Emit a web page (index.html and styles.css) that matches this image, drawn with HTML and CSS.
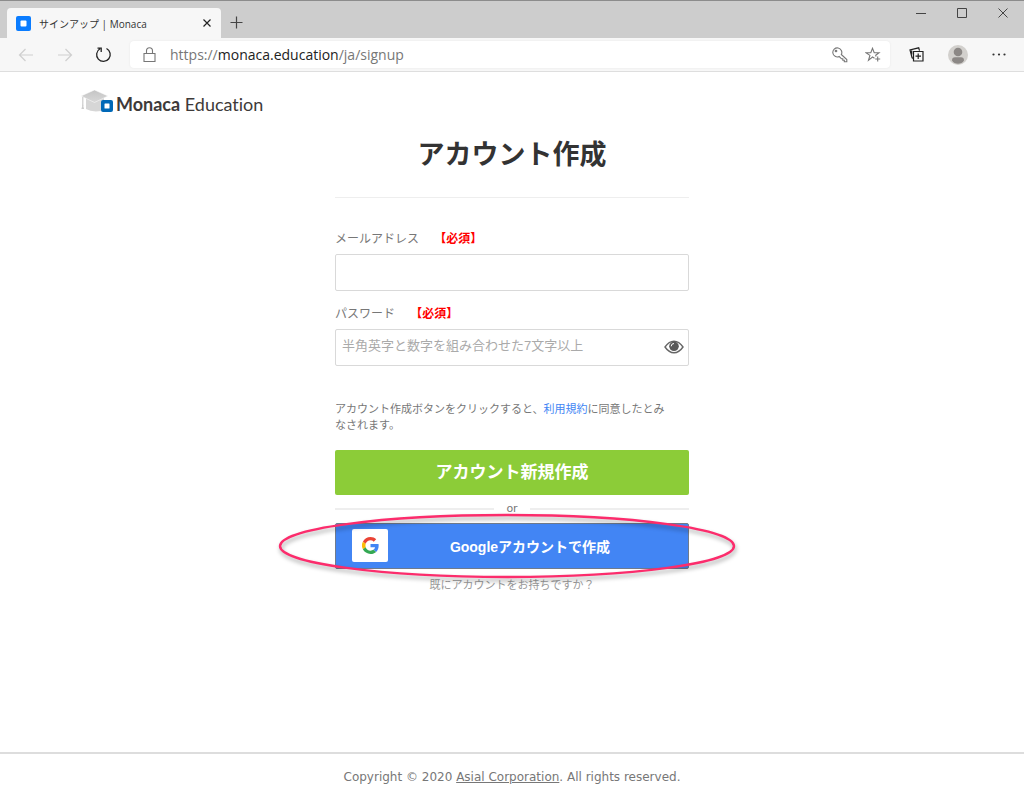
FILE: index.html
```
<!DOCTYPE html>
<html lang="ja">
<head>
<meta charset="utf-8">
<meta name="viewport" content="width=device-width, initial-scale=1">
<title>サインアップ | Monaca</title>
<link rel="stylesheet" href="styles.css">
</head>
<body>
<div class="browser">
  <div class="titlebar">
    <div class="tab">
      <svg class="tab-icon" width="15" height="15" viewBox="0 0 15 15"><rect width="15" height="15" rx="2" fill="#0a7cff"/><rect x="4.500" y="4.500" width="6" height="6" rx="1" fill="#fff"/></svg>
      <span class="tab-title">サインアップ | Monaca</span>
      <button class="tab-close" type="button" aria-label="タブを閉じる"><svg width="8" height="8" viewBox="0 0 8 8" fill="none" stroke="#222" stroke-width="1.2"><path d="M.5.5l7 7M7.5.5l-7 7"/></svg></button>
    </div>
    <button class="new-tab" type="button" aria-label="新しいタブ"><svg width="13" height="13" viewBox="0 0 13 13" fill="none" stroke="#444" stroke-width="1.2"><path d="M6.5 0.5v12M.5 6.5h12"/></svg></button>
    <div class="window-buttons">
      <button type="button" aria-label="最小化"><svg width="10" height="10" viewBox="0 0 10 10" fill="none" stroke="#444"><path d="M0 5.5h10"/></svg></button>
      <button type="button" aria-label="最大化"><svg width="10" height="10" viewBox="0 0 10 10" fill="none" stroke="#444"><path d="M.5.5h9v9h-9z"/></svg></button>
      <button type="button" aria-label="閉じる"><svg width="10" height="10" viewBox="0 0 10 10" fill="none" stroke="#444"><path d="M.5.5l9 9M9.500.5l-9 9"/></svg></button>
    </div>
  </div>
  <div class="toolbar">
    <button class="nav" type="button" aria-label="戻る"><svg width="16" height="14" viewBox="0 0 16 14" fill="none" stroke="#cfcfcf" stroke-width="1.2"><path d="M15 7H1.500M7.500 1l-6 6 6 6"/></svg></button>
    <button class="nav" type="button" aria-label="進む"><svg width="16" height="14" viewBox="0 0 16 14" fill="none" stroke="#cfcfcf" stroke-width="1.2"><path d="M1 7h13.500M8.500 1l6 6-6 6"/></svg></button>
    <button class="nav" type="button" aria-label="更新"><svg width="17" height="17" viewBox="0 0 17 17" fill="none" stroke="#222" stroke-width="1.300"><path d="M11.500 2.500a6.800 6.800 0 1 1-6.500.2M2.500 2.200h3.700v3.700"/></svg></button>
    <div class="address">
      <svg width="13" height="16" viewBox="0 0 13 16" fill="none" stroke="#777" stroke-width="1.100"><path d="M1 6.500h11v8H1zM3.500 6.500V4a3 3.200 0 0 1 6 0v2.500"/></svg>
      <span class="url">https://<b>monaca.education</b>/ja/signup</span>
      <button type="button" aria-label="パスワード"><svg width="16" height="16" viewBox="0 0 16 16" fill="none" stroke="#777" stroke-width="1.100"><path d="M9.300 7.500l5.500 5v2.300h-2.500v-1.500h-1.500v-1.500H9.500l-2.300-2.300A4.500 4.500 0 1 1 9.300 7.500z"/><circle cx="4" cy="4" r=".8"/></svg></button>
      <button type="button" aria-label="お気に入りに追加"><svg width="16" height="16" viewBox="0 0 16 16" fill="none" stroke="#777" stroke-width="1.100"><path d="M9.500 11.200L7.500 10 3.500 13.300 4.900 8.400 1 5.800h4.800L7.500 1.300l1.700 4.500H14l-3.300 2.500.4 1.200M12.700 9.500v5M10.200 12h5"/></svg></button>
    </div>
    <button class="tool" type="button" aria-label="コレクション"><svg width="15" height="15" viewBox="0 0 15 15" fill="none" stroke="#222" stroke-width="1.200"><path d="M4.500 4.500h9.500v9.500H4.500zM9.200 6.500v5.500M6.500 9.200H12M4.300 11.500l-1.200-.7L1 3l8.700-2.200.8 2.900M2.700 2.600v5"/></svg></button>
    <button class="tool" type="button" aria-label="プロフィール"><svg width="20" height="20" viewBox="0 0 20 20"><circle cx="10" cy="10" r="10" fill="#d2d0cd"/><circle cx="10" cy="7" r="4.300" fill="#8c8886"/><path d="M4 15.500Q4 12.300 7 12.300h6q3 0 3 3.200-2 3.300-6 3.300t-6-3.300z" fill="#8c8886"/></svg></button>
    <button class="tool" type="button" aria-label="設定など"><svg width="14" height="3" viewBox="0 0 14 3" fill="#333"><circle cx="1.500" cy="1.500" r="1.100"/><circle cx="7" cy="1.500" r="1.100"/><circle cx="12.500" cy="1.500" r="1.100"/></svg></button>
  </div>
</div>

<header class="site-header">
  <a class="logo" href="#">
    <svg width="32" height="23" viewBox="0 0 32 23">
      <defs>
        <linearGradient id="cap" x2="0" y2="1"><stop stop-color="#c4c4c4"/><stop offset="1" stop-color="#d8d8d8"/></linearGradient>
      </defs>
      <path d="M5 8v11q6 3.500 15 2v-8h3V8z" fill="#d6d6d6"/>
      <path d="M0 6L13.500 0 27 6l-13.500 6.500z" fill="url(#cap)" stroke="#fff" stroke-width=".5"/>
      <path d="M1.800 7v9" stroke="#ccc" stroke-width="1.200"/><path d="M1.800 14l1.300 5H.4z" fill="#ccc"/>
      <rect x="20" y="10" width="12" height="12" rx="2" fill="#0068b7"/><rect x="23.500" y="13.500" width="5" height="5" rx=".5" fill="#fff"/>
    </svg>
    <span class="logo-text"><b>Monaca</b> Education</span>
  </a>
</header>

<main class="signup">
  <h1>アカウント作成</h1>
  <form class="form">
    <label for="email">メールアドレス <strong>【必須】</strong></label>
    <div class="field"><input id="email" type="email"></div>
    <label for="password">パスワード <strong>【必須】</strong></label>
    <div class="field">
      <input id="password" type="password" placeholder="半角英字と数字を組み合わせた7文字以上">
      <button class="reveal" type="button" aria-label="パスワードを表示"><svg width="20" height="14" viewBox="0 0 20 14"><path d="M1 7q4-5.800 9-5.800T19 7q-4 5.800-9 5.800T1 7z" fill="#fff" stroke="#666" stroke-width="1.400"/><circle cx="10" cy="6.300" r="4.800" fill="#595959"/><path d="M7.200 6.300A2.800 2.800 0 0 1 10 3.500" fill="none" stroke="#fff"/></svg></button>
    </div>
    <p class="terms">アカウント作成ボタンをクリックすると、<a href="#">利用規約</a>に同意したとみなされます。</p>
    <button class="create" type="submit">アカウント新規作成</button>
    <div class="divider">or</div>
    <div class="google-wrap">
      <button class="google" type="button">
        <span class="google-tile"><svg width="17" height="17" viewBox="0 0 48 48"><path fill="#EA4335" d="M24 9.500c3.500 0 6.700 1.200 9.200 3.600l6.900-6.900C35.900 2.400 30.500 0 24 0 14.600 0 6.500 5.400 2.600 13.200l8 6.200C12.400 13.700 17.700 9.500 24 9.500z"/><path fill="#4285F4" d="M47 24.500c0-1.600-.2-3.100-.4-4.500H24v9h12.900c-.6 3-2.200 5.500-4.700 7.200l7.700 6C44.400 38 47 31.800 47 24.500z"/><path fill="#FBBC05" d="M10.500 28.600a14.500 14.500 0 0 1 0-9.200l-8-6.200a24 24 0 0 0 0 21.600z"/><path fill="#34A853" d="M24 48c6.500 0 11.900-2.100 15.900-5.800l-7.700-6c-2.200 1.500-4.900 2.300-8.200 2.300-6.300 0-11.600-4.200-13.500-9.900l-8 6.200C6.500 42.600 14.600 48 24 48z"/></svg></span>
        <span class="google-label">Googleアカウントで作成</span>
      </button>
      <svg class="highlight" viewBox="0 0 464 72" width="464" height="72"><ellipse cx="232" cy="36" rx="227" ry="31" fill="none" stroke="#fc2c6c" stroke-width="2.400"/></svg>
    </div>
    <p class="existing">既にアカウントをお持ちですか？</p>
  </form>
</main>

<footer class="footer">Copyright © 2020 <a href="#">Asial Corporation</a>. All rights reserved.</footer>
</body>
</html>
```
FILE: styles.css
```
* { box-sizing: border-box; }
body {
  margin: 0;
  min-height: 100vh;
  display: flex;
  flex-direction: column;
  background: #fff;
  color: #777;
  font-family: "Liberation Sans", "Noto Sans CJK JP", sans-serif;
  font-size: 12px;
}
button { border: 0; padding: 0; background: none; font: inherit; }
svg { display: block; flex: none; }

/* Browser chrome */
.browser { font-family: "Open Sans", "Noto Sans CJK JP", sans-serif; }
.titlebar {
  display: flex;
  align-items: flex-end;
  height: 38px;
  padding: 0 1px 0 7px;
  background: #cdcdcd;
  border-top: 1px solid #8c8c8c;
}
.tab {
  display: flex;
  align-items: center;
  width: 214px;
  height: 30px;
  padding: 0 8px 0 9px;
  background: #f7f7f7;
  border-radius: 4px 4px 0 0;
  color: #333;
  font-size: 10px;
}
.tab-title { flex: 1; margin-left: 8px; white-space: nowrap; }
.tab-close { display: grid; place-items: center; width: 12px; height: 16px; }
.new-tab { display: grid; place-items: center; width: 31px; height: 31px; }
.window-buttons { display: flex; align-self: flex-start; margin-left: auto; }
.window-buttons button { display: grid; place-items: center; width: 41px; height: 24px; }
.toolbar {
  display: flex;
  align-items: center;
  height: 34px;
  padding: 0 5px 0 6px;
  background: #f7f7f7;
  border-bottom: 1px solid #dedede;
}
.nav { display: grid; place-items: center; width: 39px; height: 28px; }
.tool { display: grid; place-items: center; width: 41px; height: 28px; }
.address {
  flex: 1;
  display: flex;
  align-items: center;
  height: 27px;
  margin: 0 6px 0 7px;
  padding: 0 1px 0 13px;
  background: #fff;
  border-radius: 4px;
  box-shadow: 0 0 2px #e4e4e4;
}
.address button { display: grid; place-items: center; width: 33px; height: 27px; }
.url { flex: 1; margin-left: 14px; font-size: 14px; color: #777; }
.url b { font-weight: 400; color: #222; }

/* Page header */
.site-header { padding: 16px 81px 0; }
.logo {
  display: inline-flex;
  align-items: center;
  gap: 3px;
  height: 26px;
  color: #3e3a39;
  text-decoration: none;
}
.logo-text { margin-top: 5px; font: 18px/20px Lato, sans-serif; font-variant-ligatures: none; }

/* Sign-up form */
.signup { width: 100%; max-width: 354px; margin: 0 auto; padding-bottom: 32px; }
h1 {
  margin: 19px 0 31px;
  padding-bottom: 22px;
  border-bottom: 1px solid #eee;
  color: #333;
  font-size: 27px;
  line-height: 40px;
  text-align: center;
}
.form label { display: block; margin-bottom: 5px; line-height: 20px; }
.form strong { margin-left: 12px; color: #f00; }
.field { position: relative; margin-bottom: 13px; }
.field input {
  display: block;
  width: 100%;
  height: 37px;
  padding: 0 36px 3px 6px;
  border: 1px solid #d9d9d9;
  border-radius: 2px;
  font: inherit;
  font-size: 13px;
  color: #555;
}
.field input::placeholder { color: #aaa; opacity: 1; }
.reveal { position: absolute; top: 0; right: 5px; display: grid; place-items: center; height: 37px; }
.terms { margin: 35px 0 17px; padding-right: 16px; font-size: 11px; line-height: 16px; }
.terms a { color: #4285f4; text-decoration: none; }
.create {
  display: block;
  width: 100%;
  height: 45px;
  padding-bottom: 4px;
  border-radius: 2px;
  background: #8ccc38;
  color: #fff;
  font-size: 17px;
  font-weight: 700;
}
.divider {
  display: flex;
  align-items: center;
  gap: 12px;
  height: 28px;
  font-family: "DejaVu Sans", sans-serif;
  font-size: 11px;
}
.divider::before, .divider::after { content: ""; flex: 1; height: 2px; background: #eee; }
.google-wrap { position: relative; }
.google {
  display: flex;
  align-items: center;
  width: 100%;
  height: 46px;
  padding: 0 16px;
  border: 1px solid #707b8c;
  border-radius: 2px;
  background: #4285f4;
  color: #fff;
  font-size: 14px;
  font-weight: 700;
}
.google-tile { display: grid; place-items: center; width: 36px; height: 33px; border-radius: 2px; background: #fff; }
.google-label { flex: 1; text-align: center; }
.highlight {
  position: absolute;
  top: -13px;
  left: -60px;
  pointer-events: none;
  filter: drop-shadow(1px 3px 2px rgba(0, 0, 0, .35));
}
.existing { margin: 8px 0 0; color: #999; font-size: 11px; line-height: 16px; text-align: center; }

.footer {
  margin-top: auto;
  padding: 13px;
  border-top: 2px solid #ddd;
  font-family: "DejaVu Sans", sans-serif;
  font-size: 12px;
  line-height: 20px;
  text-align: center;
}
.footer a { color: inherit; }
```
